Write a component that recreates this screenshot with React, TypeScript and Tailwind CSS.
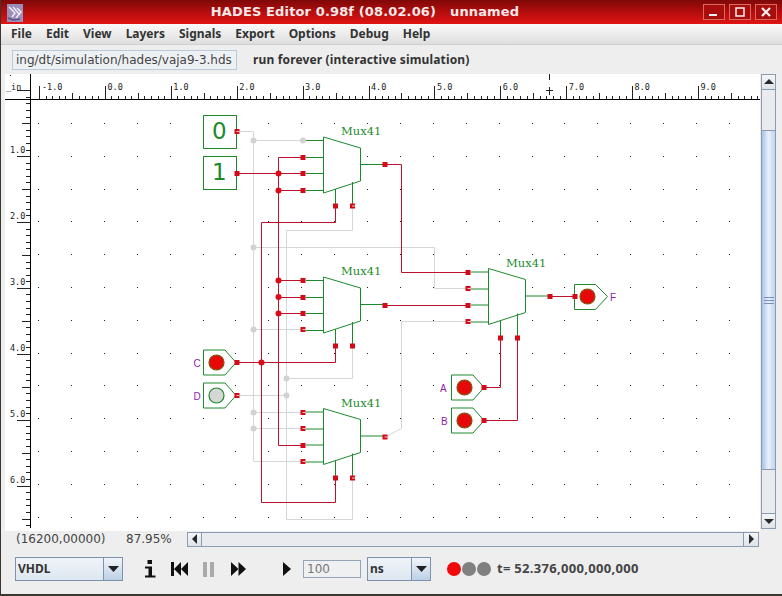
import React from "react";

const RED = "#bc102c";
const GRN = "#1c8a2c";
const GRY = "#d6d6d6";
const DOT = "#dc0a18";

function range(n: number) {
  return Array.from({ length: n }, (_, i) => i);
}

function Port({ x, y, hollow }: { x: number; y: number; hollow?: boolean }) {
  return (
    <g>
      <rect x={x - 2.5} y={y - 2.5} width={5} height={5} fill="#d40a18" />
      {hollow && <rect x={x - 0.5} y={y - 0.5} width={3} height={1} fill="#f0c8c8" />}
    </g>
  );
}

function Mux({ dx, dy }: { dx: number; dy: number }) {
  const ys = [140, 157, 173, 190];
  return (
    <g transform={`translate(${dx} ${dy})`}>
      <polygon points="323.5,137 360.5,148 360.5,181 323.5,193" fill="#fff" stroke={GRN} strokeWidth={1} />
      {ys.map((y) => (
        <line key={y} x1={306} y1={y + 0.5} x2={323} y2={y + 0.5} stroke={GRN} />
      ))}
      <line x1={361} y1={164.5} x2={385} y2={164.5} stroke={GRN} />
      <line x1={335.5} y1={189} x2={335.5} y2={206} stroke={GRN} />
      <line x1={352.5} y1={182} x2={352.5} y2={206} stroke={GRN} />
      <text x={341} y={135} fill="#1c8a2c" fontFamily="'DejaVu Serif', serif" fontSize={11.5}>
        Mux41
      </text>
    </g>
  );
}

function Pin({ x, y, on, label, lx }: { x: number; y: number; on: boolean; label: string; lx: number }) {
  return (
    <g>
      <polygon
        points={`${x},${y - 12.5} ${x + 21.5},${y - 12.5} ${x + 32.5},${y} ${x + 21.5},${y + 12.5} ${x},${y + 12.5}`}
        fill="#fff"
        stroke={GRN}
      />
      <circle cx={x + 13} cy={y} r={7.5} fill={on ? "#e80808" : "#d6d6d6"} stroke={on ? "#7a5a10" : GRN} strokeWidth={1.2} />
      <text x={lx} y={y + 4} fill="#8e24aa" fontFamily="'Liberation Sans', sans-serif" fontSize={10}>
        {label}
      </text>
    </g>
  );
}

function Circuit() {
  const gridX = range(22).map((i) => 38 + i * 32.9);
  const gridY = range(13).map((i) => 123 + i * 32.8);
  const rulerX = range(111).map((i) => 39 + i * 6.59);
  const rulerY = range(70).map((i) => 90.2 + i * 6.59);
  const red: string[] = [
    "M237 173.5H303",
    "M278.5 157.5V445.5H303",
    "M278.5 157.5H303",
    "M278.5 190.5H303",
    "M278.5 280.5H303",
    "M278.5 297.5H303",
    "M278.5 313.5H303",
    "M261.5 222.5V502.5H335.5V478",
    "M261.5 222.5H335.5V206",
    "M237 362.5H335.5V346",
    "M385 164.5H401.5V272.5H468",
    "M385 305.5H468",
    "M484 387.5H500.5V338",
    "M484 420.5H517.5V338",
    "M550 296.5H575",
  ];
  const gray: string[] = [
    "M237 131.5H253.5V461.5H303",
    "M253.5 140.5H303",
    "M253.5 247.5H434.5V288.5H468",
    "M253.5 329.5H303",
    "M253.5 412.5H303",
    "M253.5 428.5H303",
    "M286.5 230.5H352.5V206",
    "M286.5 230.5V519.5H352.5V478",
    "M286.5 378.5H352.5V346",
    "M237 395.5H286.5",
    "M385 437L401.5 428.5V321.5H468",
  ];
  return (
    <svg width={755} height={457} viewBox="5 74 755 457" className="block bg-white">
      {gridX.map((x) =>
        gridY.map((y) => <rect key={`${x}-${y}`} x={Math.round(x)} y={Math.round(y)} width={1} height={1} fill="#222" />)
      )}

      {/* rulers */}
      <line x1={5} y1={99.5} x2={760} y2={99.5} stroke="#000" />
      <line x1={30.5} y1={74} x2={30.5} y2={528} stroke="#000" />
      {rulerX.map((x, i) => {
        const top = i % 10 === 0 ? 86 : i % 5 === 0 ? 93 : 96;
        const xx = Math.round(x) + 0.5;
        return <line key={i} x1={xx} y1={top} x2={xx} y2={99} stroke="#222" />;
      })}
      {rulerY.map((y, i) => {
        const left = i % 10 === 0 ? 17 : i % 5 === 0 ? 22 : 26;
        const yy = Math.round(y) + 0.5;
        return <line key={i} x1={left} y1={yy} x2={30} y2={yy} stroke="#222" />;
      })}
      {["-1.0", "0.0", "1.0", "2.0", "3.0", "4.0", "5.0", "6.0", "7.0", "8.0", "9.0"].map((t, i) => (
        <text key={t} x={(i === 0 ? 42 : 41.5) + i * 65.9} y={90} fontFamily="'DejaVu Sans Mono', monospace" fontSize={8.5} fill="#222">
          {t}
        </text>
      ))}
      {["1.0", "2.0", "3.0", "4.0", "5.0", "6.0"].map((t, i) => (
        <text key={t} x={10} y={153 + i * 65.9} fontFamily="'DejaVu Sans Mono', monospace" fontSize={8.5} fill="#222">
          {t}
        </text>
      ))}
      <text x={6} y={90} fontFamily="'DejaVu Sans Mono', monospace" fontSize={8.5} fill="#222">
        _in
      </text>
      <rect x={10} y={75} width={1} height={1} fill="#222" />
      <line x1={549.5} y1={74} x2={549.5} y2={80} stroke="#222" />
      <path d="M546 90.5H553M549.5 87V95" stroke="#222" fill="none" />
      <line x1={26} y1={525.5} x2={30} y2={525.5} stroke="#222" />

      {gray.map((d) => (
        <path key={d} d={d} fill="none" stroke={GRY} />
      ))}
      {[
        [253.5, 140.5],
        [303, 140.5],
        [253.5, 247.5],
        [253.5, 329.5],
        [253.5, 412.5],
        [253.5, 428.5],
        [286.5, 378.5],
        [286.5, 395.5],
      ].map(([x, y]) => (
        <circle key={`${x}-${y}`} cx={x} cy={y} r={3} fill="#d2d2d2" />
      ))}

      {red.map((d) => (
        <path key={d} d={d} fill="none" stroke={RED} />
      ))}
      {[
        [278.5, 173.5],
        [278.5, 190.5],
        [278.5, 280.5],
        [278.5, 297],
        [278.5, 313.5],
        [261.5, 362.5],
      ].map(([x, y]) => (
        <circle key={`${x}-${y}`} cx={x} cy={y} r={3} fill={DOT} />
      ))}

      <Mux dx={0} dy={0} />
      <Mux dx={0} dy={140} />
      <Mux dx={0} dy={271.5} />
      <Mux dx={165} dy={131.5} />

      {/* constants */}
      <rect x={203.5} y={115.5} width={33} height={33} fill="#fff" stroke={GRN} />
      <rect x={203.5} y={156.5} width={33} height={33} fill="#fff" stroke={GRN} />
      <text x={212} y={139} fontFamily="'DejaVu Sans', sans-serif" fontSize={23} fill={GRN}>
        0
      </text>
      <text x={212} y={180} fontFamily="'DejaVu Sans', sans-serif" fontSize={23} fill={GRN}>
        1
      </text>

      <Pin x={203.5} y={362.5} on label="C" lx={193.5} />
      <Pin x={203.5} y={395.5} on={false} label="D" lx={193.5} />
      <Pin x={451.5} y={387.5} on label="A" lx={440} />
      <Pin x={451.5} y={420.5} on label="B" lx={441} />

      {/* output */}
      <polygon points="574.5,284.5 595.5,284.5 607.5,296.5 595.5,309.5 574.5,309.5" fill="#fff" stroke={GRN} />
      <circle cx={587.5} cy={296.5} r={7.5} fill="#e80808" stroke="#7a5a10" strokeWidth={1.2} />
      <text x={610} y={300.5} fill="#8e24aa" fontFamily="'Liberation Sans', sans-serif" fontSize={10}>
        F
      </text>

      {[
        [237, 173.5],
        [303, 157.5],
        [303, 173.5],
        [303, 190.5],
        [303, 280.5],
        [303, 297.5],
        [303, 313.5],
        [237, 362.5],
        [335.5, 206],
        [335.5, 346],
        [352.5, 346],
        [335.5, 478],
        [303, 445.5],
        [385, 164.5],
        [385, 305.5],
        [468, 272.5],
        [468, 305.5],
        [500.5, 338],
        [517.5, 338],
        [484, 387.5],
        [484, 420.5],
        [550, 296.5],
        [575, 296.5],
      ].map(([x, y]) => (
        <Port key={`${x}-${y}`} x={x} y={y} />
      ))}
      {[
        [237, 131.5],
        [237, 395.5],
        [303, 329.5],
        [352.5, 206],
        [352.5, 478],
        [303, 412.5],
        [303, 428.5],
        [303, 461.5],
        [385, 437],
        [468, 288.5],
        [468, 321.5],
      ].map(([x, y]) => (
        <Port key={`${x}-${y}`} x={x} y={y} hollow />
      ))}
    </svg>
  );
}

function Arrow({ dir, className }: { dir: "up" | "down" | "left" | "right"; className?: string }) {
  const pts = {
    up: "0,7 5,2 10,7",
    down: "0,3 10,3 5,8",
    left: "7,0 7,10 2,5",
    right: "3,0 3,10 8,5",
  }[dir];
  return (
    <svg width={10} height={10} viewBox="0 0 10 10" className={className}>
      <polygon points={pts} fill="#2a2a2a" />
    </svg>
  );
}

function Combo({ label, width }: { label: string; width: string }) {
  return (
    <div className={`flex h-6 border border-[#7d93ad] bg-gradient-to-b from-[#f0f4f9] to-[#dde6f0] ${width}`}>
      <div
        className="flex-1 pl-[2px] text-xs font-bold leading-[22px] text-[#333]"
        style={{ fontFamily: "'Noto Sans', sans-serif" }}
      >
        {label}
      </div>
      <div className="flex w-[19px] items-center justify-center border-l border-[#7d93ad] bg-gradient-to-b from-[#f2f5f9] to-[#bcd0e6]">
        <svg width={11} height={6} viewBox="0 0 11 6">
          <polygon points="0,0 11,0 5.5,6" fill="#222" />
        </svg>
      </div>
    </div>
  );
}

export default function App() {
  return (
    <div
      className="flex h-[596px] w-[782px] flex-col overflow-hidden border-b-2 border-l border-b-[#3a3630] border-l-[#3a3630] bg-[#eeeeee] text-[#333]"
      style={{ fontFamily: "'DejaVu Sans', sans-serif" }}
    >
      {/* Title bar */}
      <div className="relative flex h-6 shrink-0 items-center justify-center bg-gradient-to-b from-[#7e0808] via-[#b50d0d] to-[#e01414] pr-[53px]">
        <div className="absolute left-[6px] top-[4px] h-[18px] w-4">
          <svg width={16} height={18} viewBox="0 0 16 18">
            <rect width={16} height={18} fill="#9a8fb8" />
            <path d="M2 3L8 9L5 13M6 3L12 10M10 4L14 8L9 14" stroke="#efeaf6" strokeWidth={1.5} fill="none" />
            <path d="M1 14L6 16L13 15" stroke="#5e4f86" strokeWidth={1.5} fill="none" />
          </svg>
        </div>
        <span className="text-[13px] font-bold tracking-[0.13px] whitespace-pre text-[#f4e8e8]">
          HADES Editor 0.98f (08.02.06)   unnamed
        </span>
        <div className="absolute right-[5px] top-[4px] flex gap-[4px]">
          {[0, 1, 2].map((i) => (
            <div key={i} className="flex h-[16px] w-[22px] items-center justify-center border border-[#d86a60] bg-[#a80e0e]">
              <svg width={12} height={12} viewBox="0 0 12 12">
                {i === 0 && <rect x={1} y={8} width={8} height={2} fill="#f4eeee" />}
                {i === 1 && <rect x={2} y={2} width={8} height={8} fill="none" stroke="#f4eeee" strokeWidth={1.5} />}
                {i === 2 && <path d="M2 2L10 10M10 2L2 10" stroke="#f4eeee" strokeWidth={2.2} />}
              </svg>
            </div>
          ))}
        </div>
      </div>

      {/* Menu bar */}
      <div
        className="flex h-[21px] shrink-0 items-center gap-[14px] border-b border-[#cfcfcf] bg-gradient-to-b from-[#fafafa] to-[#dedede] pl-[10px] text-xs font-bold text-[#333]"
        style={{ fontFamily: "'Noto Sans', sans-serif" }}
      >
        {["File", "Edit", "View", "Layers", "Signals", "Export", "Options", "Debug", "Help"].map((m) => (
          <span key={m}>{m}</span>
        ))}
      </div>

      {/* Tool row */}
      <div className="flex h-[29px] shrink-0 items-center pl-[11px]">
        <div className="flex h-5 w-[225px] items-center overflow-hidden border border-[#bccad8] bg-[#eef1f4] pl-[3px] text-xs whitespace-nowrap text-[#444]">
          ing/dt/simulation/hades/vaja9-3.hds
        </div>
        <span
          className="ml-[16px] text-xs font-bold tracking-[0.15px] text-[#333]"
          style={{ fontFamily: "'Noto Sans', sans-serif" }}
        >
          run forever (interactive simulation)
        </span>
      </div>

      {/* Canvas + vertical scrollbar */}
      <div className="flex h-[457px] shrink-0 pl-1">
        <Circuit />
        <div className="ml-px flex h-[455px] w-[15px] flex-col border border-[#8a9bb2] bg-[#e9ebee]">
          <div className="flex h-[15px] items-center justify-center border-b border-[#8a9bb2] bg-gradient-to-b from-[#f4f6f8] to-[#dfe3e8]">
            <Arrow dir="up" />
          </div>
          <div className="h-[40px]" />
          <div className="flex h-[340px] items-center justify-center border-y border-[#8a9bb2] bg-gradient-to-r from-[#a9c2e8] via-[#e9f0fb] to-[#c0d3ee]">
            <div className="flex flex-col gap-[2px]">
              <div className="h-px w-[10px] bg-[#7a90b8]" />
              <div className="h-px w-[10px] bg-[#7a90b8]" />
              <div className="h-px w-[10px] bg-[#7a90b8]" />
            </div>
          </div>
          <div className="flex-1" />
          <div className="flex h-[15px] items-center justify-center border-t border-[#8a9bb2] bg-gradient-to-b from-[#f4f6f8] to-[#dfe3e8]">
            <Arrow dir="down" />
          </div>
        </div>
      </div>

      {/* Status + horizontal scrollbar */}
      <div className="flex h-[16px] shrink-0 items-center">
        <span className="ml-[15px] w-[110px] text-xs whitespace-nowrap text-[#444]">(16200,00000)</span>
        <span className="w-[61px] text-xs text-[#444]">87.95%</span>
        <div className="flex h-[15px] w-[572px] items-stretch border border-[#8a9bb2] bg-[#e9ebee]">
          <div className="flex w-[14px] items-center justify-center border-r border-[#8a9bb2] bg-gradient-to-b from-[#f4f6f8] to-[#dfe3e8]">
            <Arrow dir="left" />
          </div>
          <div className="flex-1" />
          <div className="flex w-[15px] items-center justify-center border-l border-[#8a9bb2] bg-gradient-to-b from-[#f4f6f8] to-[#dfe3e8]">
            <Arrow dir="right" />
          </div>
        </div>
      </div>

      {/* Bottom controls */}
      <div className="flex flex-1 items-center pb-[3px] pl-[14px]">
        <Combo label="VHDL" width="w-[108px]" />
        <svg width={14} height={20} viewBox="0 0 14 20" className="ml-[20px]">
          <rect x={4.5} y={1} width={4.5} height={4} fill="#111" />
          <path d="M2 7.5H9V16.5H12.5V18.5H2V16.5H5.5V9.5H2Z" fill="#111" />
        </svg>
        <svg width={17} height={16} viewBox="0 0 17 16" className="ml-[14px]">
          <rect x={0} y={1} width={3} height={14} fill="#111" />
          <polygon points="10,1 10,15 3,8" fill="#111" />
          <polygon points="17,1 17,15 10,8" fill="#111" />
        </svg>
        <svg width={11} height={15} viewBox="0 0 11 15" className="ml-[15px]">
          <rect x={0} y={0} width={4} height={15} fill="#aaaaaa" />
          <rect x={7} y={0} width={4} height={15} fill="#aaaaaa" />
        </svg>
        <svg width={15} height={14} viewBox="0 0 15 14" className="ml-[17px]">
          <polygon points="0,0 0,14 7.5,7" fill="#111" />
          <polygon points="7.5,0 7.5,14 15,7" fill="#111" />
        </svg>
        <svg width={8} height={14} viewBox="0 0 8 14" className="ml-[37px]">
          <polygon points="0,0 0,14 8,7" fill="#111" />
        </svg>
        <div className="ml-[12px] h-[18px] w-[58px] border border-[#95a5b5] bg-[#eef0f2] pl-[3px] text-xs leading-4 text-[#777]">100</div>
        <div className="ml-[6px]">
          <Combo label="ns" width="w-[64px]" />
        </div>
        <div className="ml-[16px] h-[14px] w-[14px] rounded-full bg-[#f20808]" />
        <div className="ml-px h-[14px] w-[14px] rounded-full bg-[#808080]" />
        <div className="ml-px h-[14px] w-[14px] rounded-full bg-[#808080]" />
        <span
          className="ml-[6px] text-[13px] font-bold tracking-[0.3px] text-[#444]"
          style={{ fontFamily: "'Noto Sans', sans-serif" }}
        >
          t= 52.376,000,000,000
        </span>
      </div>
    </div>
  );
}
